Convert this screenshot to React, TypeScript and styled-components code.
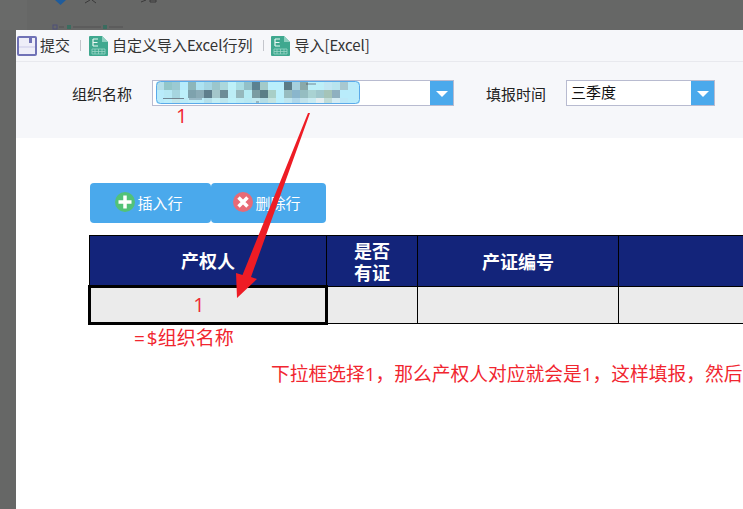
import styled, { createGlobalStyle } from "styled-components";

const GlobalStyle = createGlobalStyle`
  html, body {
    margin: 0;
    padding: 0;
    background: #fff;
    font-family: "Noto Sans CJK SC", "Liberation Sans", sans-serif;
  }
`;

const Page = styled.div`
  position: relative;
  width: 743px;
  height: 509px;
  overflow: hidden;
  display: grid;
  grid-template-columns: 16px 1fr;
  grid-template-rows: 30px 1fr;
  background: #666766;
`;

const Backdrop = styled.svg`
  grid-column: 1 / 3;
  display: block;
  width: 743px;
  height: 30px;
`;

const Panel = styled.main`
  grid-column: 2;
  min-width: 0;
  background: #fff;
  overflow: hidden;
`;

const Toolbar = styled.div`
  display: flex;
  align-items: center;
  height: 31px;
  padding-left: 1px;
  background: #f6f7fa;
  border-bottom: 1px solid #e8e9ee;
  font-size: 15px;
  color: #333;
`;

const ToolButton = styled.span<{ $gap: number }>`
  display: flex;
  align-items: center;
  gap: ${(p) => p.$gap}px;
  line-height: 20px;
  white-space: nowrap;

  b {
    font-weight: 400;
    margin-top: -2px;
  }
`;

const Divider = styled.i<{ $left: number; $right: number }>`
  width: 1px;
  height: 11px;
  margin: 0 ${(p) => p.$right}px 0 ${(p) => p.$left}px;
  background: #c4c6cc;
`;

const FilterBar = styled.div`
  display: flex;
  align-items: flex-start;
  height: 76px;
  padding: 18px 0 0 56px;
  box-sizing: border-box;
  background: #f6f7fa;
`;

const FieldLabel = styled.label<{ $after: number }>`
  width: 60px;
  margin-right: ${(p) => p.$after}px;
  font-size: 15px;
  line-height: 28px;
  color: #222;
  white-space: nowrap;
`;

const Select = styled.div<{ $width: number; $after?: number }>`
  display: flex;
  width: ${(p) => p.$width}px;
  height: 26px;
  margin-right: ${(p) => p.$after ?? 0}px;
  box-sizing: border-box;
  border: 1px solid #b8bbd0;
  background: #fff;
`;

const SelectValue = styled.div`
  flex: 1;
  min-width: 0;
  padding-left: 4px;
  font-size: 15px;
  line-height: 22px;
  color: #111;
`;

const MaskedValue = styled.div`
  flex: 1;
  min-width: 0;
  padding: 0 0 0 3px;
`;

const Highlight = styled.svg`
  display: block;
  width: 204px;
  height: 23px;
  border-radius: 4px;
`;

const SelectArrow = styled.div`
  display: flex;
  align-items: center;
  justify-content: center;
  width: 23px;
  background: #4aa9ec;

  &::after {
    content: "";
    border-left: 6px solid transparent;
    border-right: 6px solid transparent;
    border-top: 6px solid #fff;
    margin-top: 2px;
  }
`;

const Content = styled.section`
  padding: 45px 0 0 72px;
`;

const ButtonRow = styled.div`
  display: flex;
  margin-left: 2px;
  margin-bottom: 12px;
`;

const ActionButton = styled.button<{ $width: number }>`
  display: flex;
  align-items: center;
  justify-content: center;
  gap: 2px;
  width: ${(p) => p.$width}px;
  height: 40px;
  padding: 0 3px 2px 0;
  border: 0;
  border-radius: 4px;
  background: #4aa9ec;
  color: #fff;
  font-family: inherit;
  font-size: 15px;
`;

const RoundIcon = styled.svg`
  display: block;
  flex: none;
  width: 20px;
  height: 20px;
`;

const Sheet = styled.table`
  table-layout: fixed;
  width: 760px;
  border-collapse: collapse;
`;

const HeadCell = styled.th<{ $width?: number }>`
  width: ${(p) => (p.$width ? `${p.$width}px` : "auto")};
  height: 45px;
  padding: 4px 0 0;
  border: 1px solid #000;
  background: #13247a;
  color: #fff;
  font-family: "Liberation Sans", "Noto Sans CJK SC", sans-serif;
  font-size: 18px;
  font-weight: 700;
  line-height: 22.5px;
  text-align: center;
`;

const HeadLine = styled.span`
  display: block;
`;

const BodyCell = styled.td<{ $active?: boolean }>`
  height: 34px;
  padding: 0 18px 0 0;
  border: ${(p) => (p.$active ? "3px" : "1px")} solid #000;
  background: #ebebeb;
  color: #ee2a33;
  font-family: "Open Sans", "Noto Sans CJK SC", sans-serif;
  font-size: 20px;
  line-height: 24px;
  text-align: center;
`;

const Note = styled.div<{ $x: number; $y: number; $size: number }>`
  position: absolute;
  left: ${(p) => p.$x}px;
  top: ${(p) => p.$y}px;
  color: #f1262f;
  font-family: "Open Sans", "Noto Sans CJK SC", sans-serif;
  font-size: ${(p) => p.$size}px;
  line-height: 24px;
  white-space: nowrap;
`;

const ArrowLayer = styled.svg`
  position: absolute;
  left: 0;
  top: 0;
  width: 743px;
  height: 509px;
  pointer-events: none;
`;

const SaveIcon = () => (
  <svg width="20" height="20" viewBox="0 0 20 20">
    <rect x="0" y="0" width="20" height="20" rx="2" fill="#7072b6" />
    <rect x="2" y="2" width="16" height="16" fill="#eeeef8" />
    <rect x="12" y="2" width="3" height="5" fill="#7072b6" />
    <rect x="2" y="10" width="16" height="2" fill="#dcdcf0" />
  </svg>
);

const ExcelIcon = () => (
  <svg width="19" height="20" viewBox="0 0 19 20">
    <path d="M1 0 H13 L19 6 V19 Q19 20 18 20 H1 Q0 20 0 19 V1 Q0 0 1 0 Z" fill="#3fa88f" />
    <path d="M13 0 L19 6 H13 Z" fill="#8fd0c0" />
    <path d="M4 3 H9 M4 3 V10 M4 6.5 H8.5 M4 10 H9" stroke="#e8f7f2" strokeWidth="1.2" fill="none" />
    <path d="M3 13 H16 V18 H3 Z M3 15.5 H16 M6 13 V18 M9.5 13 V18 M13 13 V18" stroke="#9ad6c7" strokeWidth="0.8" fill="none" />
  </svg>
);

const mosaic = [
  ["#b4dfe9", "#93c6c9", "#9ccad2", "#b7ecfb", "#8db6ba", "#aee2f1", "#a5d5e3", "#9cc6cc", "#abd7dc", "#bdf0f8", "#a9dde4", "#93c0c8", "#5c8291", "#a3cbc9", "#bbeffc", "#bbeffc", "#5b7c88", "#a6d0dc", "#8aa9a9", "#bdeff8", "#bdeff8", "#c0e6f2", "#b8e4ee", "#a8c8d0", "#bcebf8", "#b9ecfb"],
  ["#b9ecfb", "#b6e8f4", "#a6d6df", "#bcf0fb", "#7fa3ad", "#8aabb7", "#5f7f8c", "#a4c6ca", "#6d8c98", "#bcedf6", "#95b9bd", "#b4eaf3", "#7b9ba3", "#5c7f88", "#a8cfc8", "#bbeffc", "#98bcc0", "#8bb6cc", "#96bdc2", "#a9d2d2", "#9fc7cc", "#a5c4b8", "#8fb0c0", "#b9ecfb", "#b9ecfb", "#b9ecfb"],
  ["#b9ecfb", "#bdeefa", "#c4e6ec", "#bcecf6", "#c0eef8", "#bdeefa", "#b6e0ea", "#c4eef4", "#bde6ee", "#bdf0f8", "#bcecf4", "#b8e8f2", "#c0e8f0", "#b4dde6", "#c4e4e2", "#bbeffc", "#bfe6f0", "#b0d8ea", "#c0e2ec", "#c8ecf2", "#e4eef0", "#c0dcd8", "#d4ecf4", "#bce8f8", "#b9ecfb", "#b9ecfb"],
];

const MaskedText = () => (
  <Highlight viewBox="0 0 204 23">
    <rect width="204" height="23" fill="#b9ecfb" />
    {mosaic.map((row, r) =>
      row.map((fill, c) => (
        <rect key={`${r}-${c}`} x={c * 8} y={r * 8 + 1} width="8" height="8" fill={fill} />
      )),
    )}
    <path d="M7 17.5 H28 M33 18 H46 M100 21 H103 M150 3 H160" stroke="#334" strokeWidth="1" opacity="0.55" />
    <rect x="0.5" y="0.5" width="203" height="22" rx="4" fill="none" stroke="#5aaaea" />
  </Highlight>
);

export default function App() {
  return (
    <Page>
      <GlobalStyle />
      <Backdrop viewBox="0 0 743 30">
        <rect width="27" height="30" fill="#696a69" />
        <path d="M55 0 H66 L60.5 5 Z" fill="#1f5c9c" />
        <path d="M85 3 L90 0 M96 3 L92 0 M141 2 L146 0 M150 0 H156 V2 H150 Z" stroke="#3a3a3a" strokeWidth="1" fill="none" />
        <rect x="53" y="25" width="4" height="4" fill="none" stroke="#4f5078" />
        <rect x="59" y="26" width="5" height="2" fill="#5c5c5c" />
        <rect x="67" y="25" width="4" height="4" fill="#3a6c5f" />
        <rect x="73" y="26" width="28" height="2" fill="#5c5c5c" />
        <rect x="103" y="25" width="4" height="4" fill="#3a6c5f" />
        <rect x="109" y="26" width="14" height="2" fill="#5c5c5c" />
      </Backdrop>
      <Panel>
        <Toolbar>
          <ToolButton $gap={3}>
            <SaveIcon />
            <b>提交</b>
          </ToolButton>
          <Divider $left={10} $right={8} />
          <ToolButton $gap={4}>
            <ExcelIcon />
            <b>自定义导入Excel行列</b>
          </ToolButton>
          <Divider $left={11} $right={7} />
          <ToolButton $gap={4}>
            <ExcelIcon />
            <b>导入[Excel]</b>
          </ToolButton>
        </Toolbar>
        <FilterBar>
          <FieldLabel $after={20}>组织名称</FieldLabel>
          <Select $width={302} $after={32}>
            <MaskedValue>
              <MaskedText />
            </MaskedValue>
            <SelectArrow />
          </Select>
          <FieldLabel $after={20}>填报时间</FieldLabel>
          <Select $width={149}>
            <SelectValue>三季度</SelectValue>
            <SelectArrow />
          </Select>
        </FilterBar>
        <Content>
          <ButtonRow>
            <ActionButton $width={121}>
              <RoundIcon viewBox="0 0 20 20">
                <circle cx="10" cy="10" r="10" fill="#52c278" />
                <path d="M10 3.5 V16.5 M3.5 10 H16.5" stroke="#fff" strokeWidth="3.5" />
              </RoundIcon>
              插入行
            </ActionButton>
            <ActionButton $width={115}>
              <RoundIcon viewBox="0 0 20 20">
                <circle cx="10" cy="10" r="10" fill="#e86a76" />
                <path d="M5.5 5.5 L14.5 14.5 M14.5 5.5 L5.5 14.5" stroke="#fff" strokeWidth="3.5" />
              </RoundIcon>
              删除行
            </ActionButton>
          </ButtonRow>
          <Sheet>
            <thead>
              <tr>
                <HeadCell $width={236}>产权人</HeadCell>
                <HeadCell $width={90}>
                  <HeadLine>是否</HeadLine>
                  <HeadLine>有证</HeadLine>
                </HeadCell>
                <HeadCell $width={200}>产证编号</HeadCell>
                <HeadCell />
              </tr>
            </thead>
            <tbody>
              <tr>
                <BodyCell $active>1</BodyCell>
                <BodyCell />
                <BodyCell />
                <BodyCell />
              </tr>
            </tbody>
          </Sheet>
        </Content>
      </Panel>
      <Note $x={176} $y={104} $size={20}>1</Note>
      <Note $x={134} $y={326} $size={19}>=&#8202;$组织名称</Note>
      <Note $x={271} $y={362} $size={18.75}>下拉框选择1，那么产权人对应就会是1，这样填报，然后</Note>
      <ArrowLayer viewBox="0 0 743 509">
        <path d="M310 113 L308 113 L242.5 275 L236 273 L237 298 L257 279 L251 277 Z" fill="#ee1c25" />
      </ArrowLayer>
    </Page>
  );
}
